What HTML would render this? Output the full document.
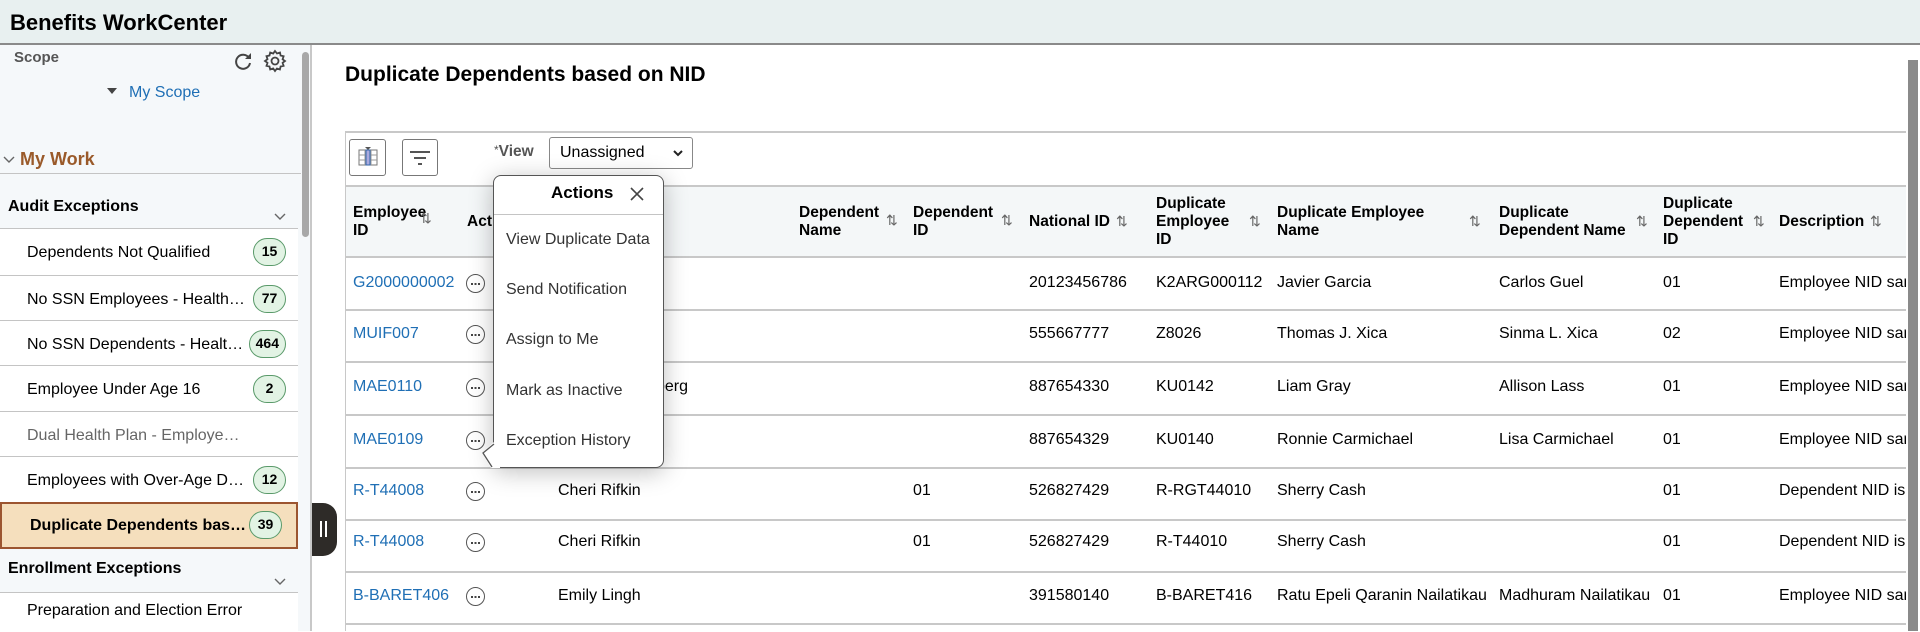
<!DOCTYPE html>
<html><head><meta charset="utf-8"><style>
*{box-sizing:border-box;margin:0;padding:0}
body{width:1920px;height:631px;overflow:hidden;position:relative;font-family:"Liberation Sans",Arial,sans-serif;background:#fff;color:#000}
.a{position:absolute;white-space:nowrap}
.top{left:0;top:0;width:1920px;height:45px;background:#e8f0f0;border-bottom:2px solid #8a8a8a}
.side{left:0;top:45px;width:312px;height:586px;background:#f5f8fa;border-right:2px solid #c8c8c8}
.item{left:0;width:298px;height:47px;background:#fff;border-top:1px solid #c4c4c4;font-size:16px;line-height:47px;padding-left:27px}
.badge{position:absolute;right:12px;top:9px;height:28px;min-width:33px;border:1.5px solid #5a9a6a;border-radius:14px;background:#e2f3e4;font-size:14px;font-weight:bold;text-align:center;line-height:25px;padding:0 6px}
.hd{font-weight:bold;font-size:16px}
.link{color:#1f6fb5}
.t{font-size:16px}
.th{font-size:15.5px;font-weight:bold;line-height:18px}
.s{color:#666;font-size:14px}
.rl{left:346px;width:1560px;height:2px;background:#c8c8c8}
.dots{width:19px;height:19px;border:1.5px solid #555;border-radius:50%}
.dots::after{content:"";position:absolute;left:4px;top:7.5px;width:2px;height:2px;background:#444;box-shadow:3.5px 0 #444,7px 0 #444}
</style></head><body>
<div class="a top"></div>
<div class="a" style="left:10px;top:10px;font-size:22px;font-weight:bold">Benefits WorkCenter</div>
<div class="a side"></div>
<div class="a" style="left:14px;top:49px;font-size:15px;font-weight:bold;color:#555">Scope</div>
<svg class="a" style="left:232px;top:50px" width="22" height="22" viewBox="0 0 22 22"><path d="M17 8A7 7 0 1 0 18 13" fill="none" stroke="#444" stroke-width="2"/><path d="M13 9h6V3z" fill="#444"/></svg>
<svg class="a" style="left:263px;top:49px" width="24" height="24" viewBox="0 0 24 24"><path d="M12 2l2 2.5 3-1 .6 3 3 .8-1 3L22 12l-2.4 1.8 1 3-3 .7-.7 3-3-1L12 22l-1.8-2.5-3 1-.7-3-3-.7 1-3L2 12l2.5-1.8-1-3 3-.7.7-3 3 1z" fill="none" stroke="#444" stroke-width="1.8"/><circle cx="12" cy="12" r="3.5" fill="none" stroke="#444" stroke-width="1.8"/></svg>
<div class="a" style="left:107px;top:88px;width:0;height:0;border-left:5px solid transparent;border-right:5px solid transparent;border-top:6px solid #444"></div>
<div class="a link" style="left:129px;top:84px;font-size:16px">My Scope</div>
<svg class="a" style="left:3px;top:156px" width="12" height="8" viewBox="0 0 12 8"><path d="M1 1l5 5 5-5" fill="none" stroke="#666" stroke-width="1.4"/></svg>
<div class="a" style="left:20px;top:149px;font-size:18px;font-weight:bold;color:#9a5a2a">My Work</div>
<div class="a" style="left:0;top:173px;width:301px;height:1px;background:#c4c4c4"></div>
<div class="a hd" style="left:8px;top:198px">Audit Exceptions</div>
<svg class="a" style="left:274px;top:213px" width="12" height="8" viewBox="0 0 12 8"><path d="M1 1l5 5 5-5" fill="none" stroke="#666" stroke-width="1.4"/></svg>
<div class="a item" style="top:228px">Dependents Not Qualified<span class="badge">15</span></div>
<div class="a item" style="top:275px">No SSN Employees - Health…<span class="badge">77</span></div>
<div class="a item" style="top:320px">No SSN Dependents - Healt…<span class="badge">464</span></div>
<div class="a item" style="top:365px">Employee Under Age 16<span class="badge">2</span></div>
<div class="a item" style="top:411px;color:#666">Dual Health Plan - Employe…</div>
<div class="a item" style="top:456px">Employees with Over-Age D…<span class="badge">12</span></div>
<div class="a item" style="top:502px;height:47px;background:#f5dfbd;border:2px solid #9c5530;font-weight:bold;padding-left:28px;line-height:43px">Duplicate Dependents bas…<span class="badge" style="top:7px;right:14px">39</span></div>
<div class="a hd" style="left:8px;top:560px">Enrollment Exceptions</div>
<svg class="a" style="left:274px;top:578px" width="12" height="8" viewBox="0 0 12 8"><path d="M1 1l5 5 5-5" fill="none" stroke="#666" stroke-width="1.4"/></svg>
<div class="a item" style="top:592px;height:40px;line-height:36px">Preparation and Election Error</div>
<div class="a" style="left:302px;top:52px;width:7px;height:185px;background:#a8a8a8;border-radius:4px"></div>
<div class="a" style="left:312px;top:503px;width:25px;height:53px;background:#2e2b28;border-radius:0 14px 14px 0"></div>
<div class="a" style="left:320px;top:521px;width:2px;height:16px;background:#fff"></div>
<div class="a" style="left:325px;top:521px;width:2px;height:16px;background:#fff"></div>

<div class="a" style="left:345px;top:63px;font-size:21px;font-weight:bold">Duplicate Dependents based on NID</div>
<div class="a" style="left:345px;top:131px;width:1561px;height:500px;border-left:1px solid #c8c8c8;border-top:2px solid #c8c8c8"></div>
<div class="a" style="left:349px;top:139px;width:37px;height:37px;border:1.5px solid #777;border-radius:3px"></div>
<svg class="a" style="left:357px;top:146px" width="22" height="22" viewBox="0 0 22 22"><rect x="2" y="4" width="18" height="15" fill="none" stroke="#777"/><path d="M2 9h18M2 14h18M8 4v15M14 4v15" stroke="#999"/><rect x="9" y="4" width="4" height="15" fill="#aad" stroke="#36a"/><path d="M8 1h6l-3 3z" fill="#555"/></svg>
<div class="a" style="left:402px;top:139px;width:36px;height:37px;border:1.5px solid #777;border-radius:3px"></div>
<div class="a" style="left:410px;top:151px;width:20px;height:2px;background:#555"></div>
<div class="a" style="left:414px;top:157px;width:12px;height:2px;background:#555"></div>
<div class="a" style="left:418px;top:163px;width:4px;height:2px;background:#555"></div>
<div class="a" style="left:494px;top:143px;font-size:15.5px;font-weight:bold;color:#555"><span style="font-weight:normal;font-size:12px;vertical-align:top">*</span>View</div>
<div class="a" style="left:549px;top:137px;width:144px;height:32px;border:1.5px solid #888;border-radius:3px;font-size:16px;line-height:29px;padding-left:10px">Unassigned</div>
<svg class="a" style="left:673px;top:148px" width="10" height="10" viewBox="0 0 10 10"><path d="M1 3l4 4 4-4" fill="none" stroke="#222" stroke-width="2"/></svg>

<div class="a" style="left:346px;top:185px;width:1560px;height:72px;background:#f4f7f8;border-top:2px solid #c8c8c8"></div>
<div class="a rl" style="top:256px"></div>
<div class="a th" style="left:353px;top:204px">Employee<br>ID</div><div class="a s" style="left:420px;top:210px">⇅</div>
<div class="a th" style="left:467px;top:213px">Act</div>
<div class="a th" style="left:799px;top:204px">Dependent<br>Name</div><div class="a s" style="left:886px;top:212px">⇅</div>
<div class="a th" style="left:913px;top:204px">Dependent<br>ID</div><div class="a s" style="left:1001px;top:212px">⇅</div>
<div class="a th" style="left:1029px;top:213px">National ID</div><div class="a s" style="left:1116px;top:213px">⇅</div>
<div class="a th" style="left:1156px;top:195px">Duplicate<br>Employee<br>ID</div><div class="a s" style="left:1249px;top:213px">⇅</div>
<div class="a th" style="left:1277px;top:204px">Duplicate Employee<br>Name</div><div class="a s" style="left:1469px;top:213px">⇅</div>
<div class="a th" style="left:1499px;top:204px">Duplicate<br>Dependent Name</div><div class="a s" style="left:1636px;top:213px">⇅</div>
<div class="a th" style="left:1663px;top:195px">Duplicate<br>Dependent<br>ID</div><div class="a s" style="left:1753px;top:213px">⇅</div>
<div class="a th" style="left:1779px;top:213px">Description</div><div class="a s" style="left:1870px;top:213px">⇅</div>

<div class="a rl" style="top:309px"></div><div class="a rl" style="top:361px"></div><div class="a rl" style="top:414px"></div><div class="a rl" style="top:467px"></div><div class="a rl" style="top:519px"></div><div class="a rl" style="top:571px"></div><div class="a rl" style="top:623px"></div>

<div class="a t link" style="left:353px;top:274px">G2000000002</div>
<div class="a t link" style="left:353px;top:325px">MUIF007</div>
<div class="a t link" style="left:353px;top:378px">MAE0110</div>
<div class="a t link" style="left:353px;top:431px">MAE0109</div>
<div class="a t link" style="left:353px;top:482px">R-T44008</div>
<div class="a t link" style="left:353px;top:533px">R-T44008</div>
<div class="a t link" style="left:353px;top:587px">B-BARET406</div>
<div class="a dots" style="left:466px;top:274px"></div>
<div class="a dots" style="left:466px;top:325px"></div>
<div class="a dots" style="left:466px;top:378px"></div>
<div class="a dots" style="left:466px;top:431px"></div>
<div class="a dots" style="left:466px;top:482px"></div>
<div class="a dots" style="left:466px;top:533px"></div>
<div class="a dots" style="left:466px;top:587px"></div>

<div class="a t" style="left:575px;top:378px">Alan Greenberg</div>
<div class="a t" style="left:558px;top:482px">Cheri Rifkin</div>
<div class="a t" style="left:558px;top:533px">Cheri Rifkin</div>
<div class="a t" style="left:558px;top:587px">Emily Lingh</div>
<div class="a t" style="left:913px;top:482px">01</div>
<div class="a t" style="left:913px;top:533px">01</div>

<div class="a t" style="left:1029px;top:274px">20123456786</div>
<div class="a t" style="left:1029px;top:325px">555667777</div>
<div class="a t" style="left:1029px;top:378px">887654330</div>
<div class="a t" style="left:1029px;top:431px">887654329</div>
<div class="a t" style="left:1029px;top:482px">526827429</div>
<div class="a t" style="left:1029px;top:533px">526827429</div>
<div class="a t" style="left:1029px;top:587px">391580140</div>

<div class="a t" style="left:1156px;top:274px">K2ARG000112</div>
<div class="a t" style="left:1156px;top:325px">Z8026</div>
<div class="a t" style="left:1156px;top:378px">KU0142</div>
<div class="a t" style="left:1156px;top:431px">KU0140</div>
<div class="a t" style="left:1156px;top:482px">R-RGT44010</div>
<div class="a t" style="left:1156px;top:533px">R-T44010</div>
<div class="a t" style="left:1156px;top:587px">B-BARET416</div>

<div class="a t" style="left:1277px;top:274px">Javier Garcia</div>
<div class="a t" style="left:1277px;top:325px">Thomas J. Xica</div>
<div class="a t" style="left:1277px;top:378px">Liam Gray</div>
<div class="a t" style="left:1277px;top:431px">Ronnie Carmichael</div>
<div class="a t" style="left:1277px;top:482px">Sherry Cash</div>
<div class="a t" style="left:1277px;top:533px">Sherry Cash</div>
<div class="a t" style="left:1277px;top:587px">Ratu Epeli Qaranin Nailatikau</div>

<div class="a t" style="left:1499px;top:274px">Carlos Guel</div>
<div class="a t" style="left:1499px;top:325px">Sinma L. Xica</div>
<div class="a t" style="left:1499px;top:378px">Allison Lass</div>
<div class="a t" style="left:1499px;top:431px">Lisa Carmichael</div>
<div class="a t" style="left:1499px;top:587px">Madhuram Nailatikau</div>

<div class="a t" style="left:1663px;top:274px">01</div>
<div class="a t" style="left:1663px;top:325px">02</div>
<div class="a t" style="left:1663px;top:378px">01</div>
<div class="a t" style="left:1663px;top:431px">01</div>
<div class="a t" style="left:1663px;top:482px">01</div>
<div class="a t" style="left:1663px;top:533px">01</div>
<div class="a t" style="left:1663px;top:587px">01</div>

<div class="a t" style="left:1779px;top:274px;width:127px;overflow:hidden">Employee NID same</div>
<div class="a t" style="left:1779px;top:325px;width:127px;overflow:hidden">Employee NID same</div>
<div class="a t" style="left:1779px;top:378px;width:127px;overflow:hidden">Employee NID same</div>
<div class="a t" style="left:1779px;top:431px;width:127px;overflow:hidden">Employee NID same</div>
<div class="a t" style="left:1779px;top:482px;width:127px;overflow:hidden">Dependent NID is</div>
<div class="a t" style="left:1779px;top:533px;width:127px;overflow:hidden">Dependent NID is</div>
<div class="a t" style="left:1779px;top:587px;width:127px;overflow:hidden">Employee NID same</div>

<div class="a" style="left:1906px;top:45px;width:14px;height:586px;background:#fff"></div>
<div class="a" style="left:1908px;top:60px;width:10px;height:571px;background:#8a8a8a"></div>

<div class="a" style="left:493px;top:175px;width:171px;height:293px;background:#fff;border:1.5px solid #555;border-radius:8px;box-shadow:0 4px 24px rgba(0,0,0,.25)"></div>
<svg class="a" style="left:480px;top:440px" width="20" height="30" viewBox="0 0 20 30"><path d="M14 2L2 13l9 15h9V2z" fill="#fff"/><path d="M14 4L3 13l9 14" fill="none" stroke="#555" stroke-width="1.3"/></svg>
<div class="a" style="left:551px;top:183px;font-size:17px;font-weight:bold">Actions</div>
<svg class="a" style="left:630px;top:187px" width="14" height="14" viewBox="0 0 14 14"><path d="M1 1l12 12M13 1L1 13" stroke="#444" stroke-width="1.6"/></svg>
<div class="a" style="left:494px;top:214px;width:169px;height:1px;background:#c4c4c4"></div>
<div class="a t" style="left:506px;top:231px;color:#333">View Duplicate Data</div>
<div class="a t" style="left:506px;top:281px;color:#333">Send Notification</div>
<div class="a t" style="left:506px;top:331px;color:#333">Assign to Me</div>
<div class="a t" style="left:506px;top:382px;color:#333">Mark as Inactive</div>
<div class="a t" style="left:506px;top:432px;color:#333">Exception History</div>
</body></html>
